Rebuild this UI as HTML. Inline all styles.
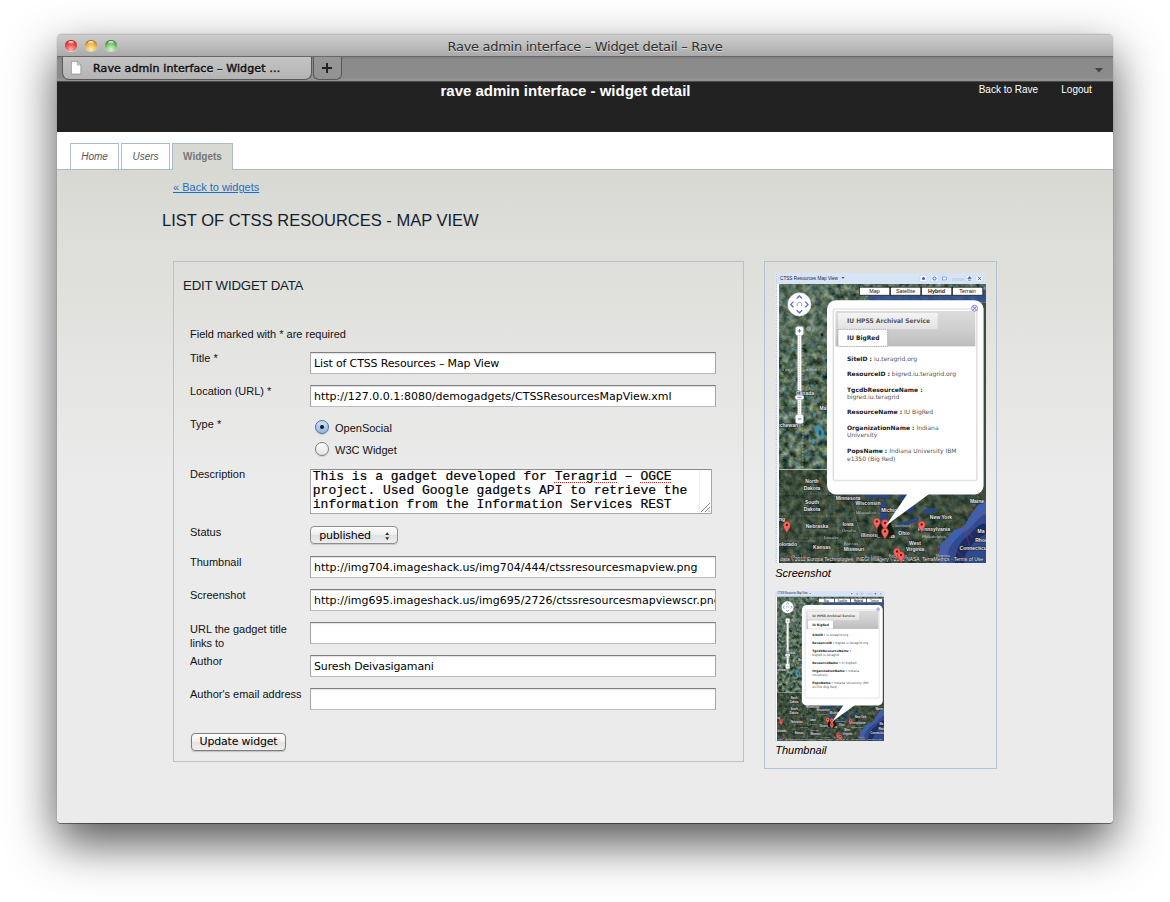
<!DOCTYPE html>
<html lang="en">
<head>
<meta charset="utf-8">
<title>Rave admin interface - Widget detail - Rave</title>
<style>
*{box-sizing:border-box}
html,body{margin:0;padding:0}
body{width:1170px;height:902px;background:#fff;position:relative;overflow:hidden;font-family:"Liberation Sans",Arial,sans-serif;color:#000}
.abs{position:absolute}
.win{position:absolute;left:57px;top:34px;width:1056px;height:789px;border-radius:5px 5px 4px 4px;background:#ebebeb;box-shadow:0 0 1px rgba(0,0,0,.5),0 1px 0 rgba(0,0,0,.4),0 20px 48px rgba(0,0,0,.68)}
.clip{position:absolute;left:0;top:0;width:1056px;height:789px;border-radius:5px 5px 4px 4px;overflow:hidden}
.titlebar{position:absolute;left:0;top:0;width:1056px;height:23px;background:linear-gradient(#cccccc,#bdbdbd 50%,#a9a9a9);border-bottom:1px solid #686868;border-top:1px solid #bcbcbc}
.title{position:absolute;left:0;width:1056px;top:4px;text-align:center;font:13px/16px "DejaVu Sans","Liberation Sans",sans-serif;color:#2f2f2f;letter-spacing:-.3px;text-shadow:0 1px 0 rgba(255,255,255,.5)}
.tl{position:absolute;top:4.9px;width:11.6px;height:11.6px;border-radius:50%;box-shadow:0 1px 0 rgba(255,255,255,.45)}
.tl.r{left:8px;background:radial-gradient(circle at 50% 86%,#ffb9b2 0,#f4645e 36%,#e23e3c 60%,#9a2222 88%,#7e1a1a 100%)}
.tl.y{left:28px;background:radial-gradient(circle at 50% 86%,#fff2ac 0,#f9c762 36%,#eb9f3e 60%,#96601a 88%,#7c4e12 100%)}
.tl.g{left:48px;background:radial-gradient(circle at 50% 86%,#dcf6c4 0,#9bd689 36%,#62b055 60%,#337330 88%,#285c26 100%)}
.tl:after{content:"";position:absolute;left:3px;top:1.2px;width:6px;height:3.4px;border-radius:50%;background:linear-gradient(rgba(255,255,255,.9),rgba(255,255,255,.15))}
.tabbar{position:absolute;left:0;top:23px;width:1056px;height:25px;background:linear-gradient(#7e7e7e,#8b8b8b 3px,#8b8b8b 21px,#9a9a9a 23px,#8a8a8a);border-bottom:1px solid #4a4a4a}
.btab{position:absolute;left:5px;top:0;width:250px;height:23px;background:linear-gradient(#c4c4c4,#b4b4b4);border:1px solid #585858;border-top:0;border-radius:0 0 7px 7px}
.btab span{position:absolute;left:30px;top:3.8px;font:11px/16px "DejaVu Sans","Liberation Sans",sans-serif;color:#111;letter-spacing:.12px;-webkit-text-stroke:.45px #111;white-space:nowrap;text-shadow:0 1px 0 rgba(255,255,255,.4)}
.plus{position:absolute;left:255.5px;top:0;width:29.5px;height:23px;background:linear-gradient(#969696,#929292);border:1px solid #585858;border-top:0;border-radius:0 0 6px 6px}
.hdr{position:absolute;left:0;top:48px;width:1056px;height:50px;background:#222}
.hdr h1{position:absolute;left:0;top:0;margin:0;width:1017px;text-align:center;font:bold 15px/18px "Liberation Sans",sans-serif;color:#fff;padding-top:.2px}
.hdr a{position:absolute;top:0;font:10px/14px "Liberation Sans",sans-serif;color:#fff;text-decoration:none;white-space:nowrap}
.nav{position:absolute;left:0;top:98px;width:1056px;height:38px;background:#fff;border-bottom:1px solid #a9bccb}
.nav a{position:absolute;top:11px;height:26px;border:1px solid #a9bccb;border-bottom:0;background:#fff;font:italic 10px/25px "Liberation Sans",sans-serif;color:#555;text-align:center;text-decoration:none}
.nav a.on{background:#d9d9d4;font:bold 10px/25px "Liberation Sans",sans-serif;color:#777;height:27px}
.content{position:absolute;left:0;top:136px;width:1056px;height:653px;background:linear-gradient(#d9d9d4 0,#ebebeb 310px,#ebebeb 100%)}

.content .back{position:absolute;left:116px;top:10px;font:11px/14px "Liberation Sans",sans-serif;color:#1a6fc4;text-decoration:underline;white-space:nowrap}
.content h2{position:absolute;left:105px;top:40px;margin:0;font:normal 16.5px/20px "Liberation Sans",sans-serif;color:#13202c;white-space:nowrap;letter-spacing:0}
.panel{position:absolute;border:1px solid #b3c3d1}
.panel h3{position:absolute;left:9px;top:15.7px;margin:0;font:normal 13.25px/16px "Liberation Sans",sans-serif;color:#13202c;white-space:nowrap;letter-spacing:-.2px}
.lbl{position:absolute;left:16px;font:11px/13px "Liberation Sans",sans-serif;color:#111;white-space:nowrap}
.inp{position:absolute;left:136px;width:406px;height:22px;background:#fff;border:1px solid #a6a6a6;border-top-color:#7f7f7f;border-bottom-color:#bcbcbc;box-shadow:inset 0 1px 1px rgba(0,0,0,.12);font:11px/20px "DejaVu Sans","Liberation Sans",sans-serif;color:#000;padding:1px 0 0 3px;white-space:nowrap;overflow:hidden;letter-spacing:0}
.radio{position:absolute;left:140.5px;width:14px;height:14px;margin-top:-.5px;border-radius:50%;border:1px solid #7d7d7d;background:linear-gradient(#fdfdfd,#e3e3e3);box-shadow:0 1px 1px rgba(0,0,0,.12)}
.radio.on{border-color:#4f6f9f;background:linear-gradient(#cfe0f6,#8fb3e6)}
.radio.on:after{content:"";position:absolute;left:4px;top:4px;width:4px;height:4px;border-radius:50%;background:#1a1a1a}
.rl{position:absolute;left:161px;font:11px/13px "Liberation Sans",sans-serif;color:#111;white-space:nowrap}
.ta{position:absolute;left:136px;top:207px;width:402px;height:45px;background:#fff;border:1px solid #a8a8a8;border-top-color:#8a8a8a;font:13px/14px "Liberation Mono",monospace;color:#000;padding:0 0 0 1.8px;white-space:pre;overflow:hidden;-webkit-text-stroke:.2px #000}
.ta u{text-decoration:underline dotted #e0201a;text-decoration-thickness:1.4px;text-underline-offset:1.5px}
.ta i{position:absolute;right:0;top:0;width:12px;height:43px;background:#fff;border-left:1px solid #eee}
.sel svg{position:absolute;right:7.5px;top:4.5px}
.sel{position:absolute;left:136px;top:264px;width:88px;height:17.7px;padding-top:.6px;border:1px solid #8e8e8e;border-radius:4px;background:linear-gradient(#fefefe,#ececec 50%,#e0e0e0 51%,#ededed);box-shadow:0 1px 1px rgba(0,0,0,.15);font:11px/15px "DejaVu Sans","Liberation Sans",sans-serif;color:#000;padding-left:8.2px;letter-spacing:-.2px}
.btn{position:absolute;left:17px;top:471px;width:95px;height:18px;border:1px solid #7e7e7e;border-radius:4px;background:linear-gradient(#fefefe,#efefef 50%,#e3e3e3 51%,#efefef);box-shadow:0 1px 1px rgba(0,0,0,.18);font:11px/16.5px "DejaVu Sans","Liberation Sans",sans-serif;color:#000;text-align:center;letter-spacing:-.2px}
.cap{position:absolute;left:10.2px;font:italic 11px/14px "Liberation Sans",sans-serif;color:#000}
</style>
</head>
<body>
<div class="win"><div class="clip">
  <div class="titlebar">
    <div class="tl r"></div><div class="tl y"></div><div class="tl g"></div>
    <div class="title">Rave admin interface – Widget detail – Rave</div>
  </div>
  <div class="tabbar">
    <div class="btab">
      <svg class="abs" style="left:6.500px;top:3px" width="12.700" height="15.400" viewBox="0 0 14 17"><path d="M1.5 1.5h6.500l4 4v10h-10.500z" fill="#fff" stroke="#8a8a8a" stroke-width=".8"/><path d="M8 1.500v4h4z" fill="#e4e4e4" stroke="#8a8a8a" stroke-width=".7"/></svg>
      <span>Rave admin interface – Widget …</span>
    </div>
    <div class="plus"><svg class="abs" style="left:7.3px;top:4.8px" width="12" height="12" viewBox="0 0 12 12"><path d="M6 1v10M1 6h10" stroke="#222" stroke-width="2" fill="none"/></svg></div>
    <svg class="abs" style="left:1037.5px;top:11px" width="8" height="5" viewBox="0 0 8 5"><path d="M0 0h8l-4 4.600z" fill="#444"/></svg>
  </div>
  <div class="hdr">
    <h1>rave admin interface - widget detail</h1>
    <a style="left:921.7px;top:.5px">Back to Rave</a>
    <a style="left:1004.3px;top:.5px">Logout</a>
  </div>
  <div class="nav">
    <a style="left:13px;width:49px">Home</a>
    <a style="left:64px;width:49px">Users</a>
    <a class="on" style="left:115px;width:61px">Widgets</a>
  </div>
  <div class="content">
    <a class="back">« Back to widgets</a>
    <h2>LIST OF CTSS RESOURCES - MAP VIEW</h2>
    <div class="panel" style="left:116px;top:91px;width:571px;height:501px">
      <h3>EDIT WIDGET DATA</h3>
      <div class="lbl" style="top:66px">Field marked with * are required</div>
      <div class="lbl" style="top:90px">Title *</div>
      <div class="inp" style="top:90px;letter-spacing:-.15px">List of CTSS Resources – Map View</div>
      <div class="lbl" style="top:123px">Location (URL) *</div>
      <div class="inp" style="top:123px">http://127.0.0.1:8080/demogadgets/CTSSResourcesMapView.xml</div>
      <div class="lbl" style="top:156px">Type *</div>
      <div class="radio on" style="top:158px"></div><div class="rl" style="top:160px">OpenSocial</div>
      <div class="radio" style="top:180.5px"></div><div class="rl" style="top:182px">W3C Widget</div>
      <div class="lbl" style="top:206px">Description</div>
      <div class="ta">This is a gadget developed for <u>Teragrid</u> – <u>OGCE</u>
project. Used Google gadgets API to retrieve the
information from the Information Services REST<i><svg class="abs" style="right:0;bottom:0" width="11" height="11" viewBox="0 0 11 11"><path d="M10 1L1 10M10 5L5 10M10 8.500L8.500 10" stroke="#8a8a8a" stroke-width="1" fill="none"/></svg></i></div>
      <div class="lbl" style="top:264px">Status</div>
      <div class="sel">published<svg width="4.400" height="8.400" viewBox="0 0 5 9"><path d="M2.500 0L4.800 3.200H.2zM2.500 9L4.800 5.800H.2z" fill="#333"/></svg></div>
      <div class="lbl" style="top:294px">Thumbnail</div>
      <div class="inp" style="top:294px">http://img704.imageshack.us/img704/444/ctssresourcesmapview.png</div>
      <div class="lbl" style="top:327px">Screenshot</div>
      <div class="inp" style="top:327px">http://img695.imageshack.us/img695/2726/ctssresourcesmapviewscr.png</div>
      <div class="lbl" style="top:359.5px;white-space:normal;width:110px;line-height:14px">URL the gadget title links to</div>
      <div class="inp" style="top:360px"></div>
      <div class="lbl" style="top:393px">Author</div>
      <div class="inp" style="top:393px;letter-spacing:-.15px">Suresh Deivasigamani</div>
      <div class="lbl" style="top:426px">Author's email address</div>
      <div class="inp" style="top:426px"></div>
      <div class="btn">Update widget</div>
    </div>
    <div class="panel" style="left:707px;top:91px;width:233px;height:508px">
      <div class="abs" id="shot" style="left:10px;top:11px;width:211px;height:290px;background:#566"><svg width="211" height="290" viewBox="-1 0 211 290" preserveAspectRatio="none" style="position:absolute;left:0;top:0;display:block"><defs>
<filter id="sata" x="0" y="0" width="100%" height="100%" color-interpolation-filters="sRGB">
<feTurbulence type="fractalNoise" baseFrequency="0.15" numOctaves="3" seed="7" result="n"/>
<feColorMatrix in="n" type="matrix" values="0.8 0.3 0 0 -0.23  0.8 0.1 0 0 -0.04  0.7 0 0.25 0 -0.135  0 0 0 0 1"/>
</filter>
<linearGradient id="tga" x1="0" y1="0" x2="0" y2="1"><stop offset="0" stop-color="#dcdcdc"/><stop offset=".5" stop-color="#cfcfcf"/><stop offset="1" stop-color="#bdbdbd"/></linearGradient>
<linearGradient id="t1a" x1="0" y1="0" x2="0" y2="1"><stop offset="0" stop-color="#f4f4f4"/><stop offset="1" stop-color="#e2e2e2"/></linearGradient>
<radialGradient id="oca" cx="1" cy="1" r="1"><stop offset="0" stop-color="#3a62a8"/><stop offset=".6" stop-color="#2c4c8c"/><stop offset="1" stop-color="#1d2f5c"/></radialGradient>
<clipPath id="mca"><rect x="3" y="11" width="207" height="279"/></clipPath>
<style>.ml{font-family:'Liberation Sans',sans-serif;font-weight:bold;fill:#e9e9e9;stroke:#1c1c1c;stroke-opacity:.8;stroke-width:1.2px;paint-order:stroke;stroke-linejoin:round}</style>
</defs><rect x="-1" y="0" width="211" height="290" fill="#eef3fb"/><rect x="1" y="0" width="209" height="11" fill="#d6e4f6"/><text x="4" y="6.8" font-size="5.6" font-family="'Liberation Sans',sans-serif" fill="#1b1b3a" textLength="58" lengthAdjust="spacingAndGlyphs">CTSS Resources Map View</text><path d="M65.500 3.900h3l-1.500 2z" fill="#3355aa"/><rect x="144" y="2.2" width="7" height="6.6" rx="1" fill="#f4f7fd" stroke="#b9c8e6" stroke-width=".5"/><rect x="155" y="2.2" width="7" height="6.6" rx="1" fill="#f4f7fd" stroke="#b9c8e6" stroke-width=".5"/><rect x="165" y="2.2" width="7" height="6.6" rx="1" fill="#f4f7fd" stroke="#b9c8e6" stroke-width=".5"/><rect x="190" y="2.2" width="7" height="6.6" rx="1" fill="#f4f7fd" stroke="#b9c8e6" stroke-width=".5"/><rect x="200" y="2.2" width="7" height="6.6" rx="1" fill="#f4f7fd" stroke="#b9c8e6" stroke-width=".5"/><circle cx="147.5" cy="5.5" r="1.5" fill="#3a5fc4"/><circle cx="158.5" cy="5.5" r="1.6" fill="none" stroke="#3a5fc4" stroke-width=".9"/><rect x="166.6" y="4" width="3.8" height="3" fill="none" stroke="#5a7ad0" stroke-width=".7"/><path d="M193.5 3.6l1.8 2h-3.6zM191.8 7.2h3.4" stroke="#3a5fc4" stroke-width=".7" fill="#3a5fc4"/><path d="M202 3.8l3 3.4M205 3.8l-3 3.4" stroke="#3a5fc4" stroke-width=".9"/><text x="176" y="7.6" font-size="5" font-family="'Liberation Sans',sans-serif" fill="#b4bfd6">move</text><path d="M0.200 1V290" stroke="#a9c0e8" stroke-width="1.600" stroke-dasharray="1 1.200"/><rect x="1.500" y="11" width="1.500" height="279" fill="#fff"/><g clip-path="url(#mca)"><rect x="3" y="11" width="207" height="279" fill="#56665a"/><rect x="3" y="11" width="207" height="279" filter="url(#sata)"/><rect x="3" y="197" width="207" height="93" fill="#262e1f" opacity=".48"/><rect x="3" y="11" width="50" height="60" fill="#6f7f74" opacity=".25"/><path d="M95 19c10-3 30-5 50-4s40-2 65 2v12H95c-4-3-4-8 0-10z" fill="#34528f" opacity=".9"/><rect x="206.500" y="30" width="4" height="200" fill="#3d4b40"/><path d="M210 227L200.800 233L192.900 244.900L187.900 253.900L177.900 256.900L170.900 265.900L163.900 271.900L163.900 290H210z" fill="#3f60ad"/><path d="M210 241c-5 2-9 6-13 11s-9 6-13 10-9 9-11 14-2 9-2 14h39z" fill="#2d4a92"/><path d="M210 250c-6 1-10 4-14 9s-9 7-12 12-5 12-5 19h9c0-7 3-12 7-17s8-9 15-12z" fill="#1b2d62"/><path d="M182.900 233L210 242M187.900 241L210 251M192.900 251L202.800 259M187.900 254L193.900 274M188.900 254L196.900 265M169.900 268L187.900 285M167.900 273L183.900 290M161.900 272L175.900 290M159.900 273L162.900 290" stroke="#a8384a" stroke-width=".55" fill="none" opacity=".9"/><path d="M103.500 229c2.500-1.500 6-.5 7 3s.5 9 0 14-5 6-6 2 .5-8 0-11-3-6.500-1-8z" fill="#2b4684"/><path d="M92 221c5-2 14-2 20 1s2 4-4 3-11 1-16 0-3-3 0-4z" fill="#2b4684"/><path d="M125 222c4-1 9 2 11 6s3 10 0 12-5-3-7-7-7-9-4-11z" fill="#263f7c"/><path d="M124 250c5-1 11-3 15-5s5 0 3 2-10 5-16 6-5-2-2-3z" fill="#2b4684"/><path d="M148 237c4-2 10-2 13-1s0 3-4 4-8 1-10 0 0-2 1-3z" fill="#2b4684"/><path d="M40 153c3-2 7 1 8 6s0 8-3 7-3-4-5-6-2-5 0-7zM37 140c2-1 4 1 3 3s-4 1-3-3zM36 166c2 0 4 2 3 4s-4 0-3-4z" fill="#3f93b4" opacity=".85"/><path d="M43 157c2 0 3 3 2 5s-3-1-2-5z" fill="#1d4f6c"/><path d="M31 54c2-1 4 0 4 2s-2 3-4 2-1-3 0-4z" fill="#c9d0d0" opacity=".55"/><path d="M45 60c2 0 3 2 2 3s-3 0-2-3z" fill="#1a1f1c"/><path d="M3 97H51" stroke="#d8d8c8" stroke-width=".6" stroke-dasharray="2 1" opacity=".8"/><path d="M26.8 70V196" stroke="#d8d8c8" stroke-width=".6" stroke-dasharray="2 1" opacity=".7"/><path d="M3 196.5H60" stroke="#cfcfc4" stroke-width=".9" opacity=".9"/><path d="M3 221H58M3 243H62M20 265H75M58 197V243M62 243V290M75 221l4 22 6 20 8 14M3 268H40" stroke="#c9c9b8" stroke-width=".5" stroke-dasharray="1.6 1" opacity=".6" fill="none"/><text x="36" y="209.5" font-size="5.0" text-anchor="middle" class="ml">North</text><text x="36" y="216.5" font-size="5.0" text-anchor="middle" class="ml">Dakota</text><text x="36" y="231" font-size="5.0" text-anchor="middle" class="ml">South</text><text x="36" y="238" font-size="5.0" text-anchor="middle" class="ml">Dakota</text><text x="41" y="255" font-size="5.0" text-anchor="middle" class="ml">Nebraska</text><text x="72" y="252.5" font-size="5.0" text-anchor="middle" class="ml">Iowa</text><text x="46" y="276" font-size="5.0" text-anchor="middle" class="ml">Kansas</text><text x="78" y="278" font-size="5.0" text-anchor="middle" class="ml">Missouri</text><text x="93" y="263.5" font-size="5.0" text-anchor="middle" class="ml">Illinois</text><text x="128" y="262" font-size="5.0" text-anchor="middle" class="ml">Ohio</text><text x="92" y="232" font-size="5.0" text-anchor="middle" class="ml">Wisconsin</text><text x="116" y="239" font-size="5.0" text-anchor="middle" class="ml">Michigan</text><text x="165" y="245.5" font-size="5.0" text-anchor="middle" class="ml">New York</text><text x="139" y="271.5" font-size="5.0" text-anchor="middle" class="ml">West</text><text x="139" y="278" font-size="5.0" text-anchor="middle" class="ml">Virginia</text><text x="198" y="277" font-size="5.0" text-anchor="middle" class="ml">Connecticut</text><text x="207" y="269" font-size="5.0" text-anchor="middle" class="ml">Rhode</text><text x="201" y="230" font-size="5.0" text-anchor="middle" class="ml">Maine</text><text x="158" y="258" font-size="5.0" text-anchor="middle" class="ml">Pennsylvania</text><text x="10" y="273" font-size="5.0" text-anchor="middle" class="ml">Colorado</text><text x="72" y="226.5" font-size="5.0" text-anchor="middle" class="ml">Minnesota</text><text x="110" y="264.5" font-size="5.0" text-anchor="middle" class="ml">Indiana</text><text x="12" y="154" font-size="5.0" text-anchor="middle" class="ml">tchewan</text><text x="47" y="136.5" font-size="5.0" text-anchor="middle" class="ml">Ma</text><text x="6" y="247.5" font-size="5.0" text-anchor="middle" class="ml">ng</text><text x="205" y="260" font-size="5.0" text-anchor="middle" class="ml">Ma</text><text x="90" y="241" font-size="4.4" text-anchor="middle" font-family="'Liberation Sans',sans-serif" fill="#d9d9d9" opacity=".75">Milwaukee</text><text x="55" y="266" font-size="4.4" text-anchor="middle" font-family="'Liberation Sans',sans-serif" fill="#d9d9d9" opacity=".75">Lincoln</text><text x="73" y="259" font-size="4.4" text-anchor="middle" font-family="'Liberation Sans',sans-serif" fill="#d9d9d9" opacity=".75">Omaha</text><text x="125" y="254" font-size="4.4" text-anchor="middle" font-family="'Liberation Sans',sans-serif" fill="#d9d9d9" opacity=".75">Cleveland</text><text x="158" y="265" font-size="4.4" text-anchor="middle" font-family="'Liberation Sans',sans-serif" fill="#d9d9d9" opacity=".75">Philadelphia</text><text x="75" y="272" font-size="4.4" text-anchor="middle" font-family="'Liberation Sans',sans-serif" fill="#d9d9d9" opacity=".75">Kansas</text><text x="78" y="277" font-size="4.4" text-anchor="middle" font-family="'Liberation Sans',sans-serif" fill="#d9d9d9" opacity=".75">City</text><text x="97" y="285" font-size="4.4" text-anchor="middle" font-family="'Liberation Sans',sans-serif" fill="#d9d9d9" opacity=".75">St. Louis</text><text x="122" y="284" font-size="4.4" text-anchor="middle" font-family="'Liberation Sans',sans-serif" fill="#d9d9d9" opacity=".75">Kentucky</text><text x="167" y="284" font-size="4.4" text-anchor="middle" font-family="'Liberation Sans',sans-serif" fill="#d9d9d9" opacity=".75">Virginia</text><path d="M101 251l14-1 3 10-6 6-10-2z" fill="#0c0f0c" opacity=".85"/><text x="4" y="286" font-size="9" font-family="'Liberation Serif',serif" opacity=".95"><tspan fill="#3a66d8">G</tspan><tspan fill="#d8413a">o</tspan><tspan fill="#e6b422">o</tspan><tspan fill="#3a66d8">g</tspan><tspan fill="#3aa856">l</tspan><tspan fill="#d8413a">e</tspan></text><text x="4" y="288" font-size="4.9" font-family="'Liberation Sans',sans-serif" fill="#f1f1f1" stroke="#222" stroke-width=".5" paint-order="stroke" textLength="203" lengthAdjust="spacingAndGlyphs">data ©2012 Europa Technologies, INEGI Imagery ©2012 NASA, TerraMetrics - Terms of Use</text><g transform="translate(10.8,252.5) scale(1.0)"><path d="M0 8.2C-0.6 4.6-3.6 3-3.6-0.4a3.6 3.6 0 0 1 7.2 0C3.6 3 0.6 4.6 0 8.2z" fill="#f2665e" stroke="#8c2a25" stroke-width=".5"/><circle cx="0" cy="-0.5" r="1.15" fill="#5a1512"/></g><g transform="translate(100.8,249) scale(1.0)"><path d="M0 8.2C-0.6 4.6-3.6 3-3.6-0.4a3.6 3.6 0 0 1 7.2 0C3.6 3 0.6 4.6 0 8.2z" fill="#f2665e" stroke="#8c2a25" stroke-width=".5"/><circle cx="0" cy="-0.5" r="1.15" fill="#5a1512"/></g><g transform="translate(109,250.5) scale(1.0)"><path d="M0 8.2C-0.6 4.6-3.6 3-3.6-0.4a3.6 3.6 0 0 1 7.2 0C3.6 3 0.6 4.6 0 8.2z" fill="#f2665e" stroke="#8c2a25" stroke-width=".5"/><circle cx="0" cy="-0.5" r="1.15" fill="#5a1512"/></g><g transform="translate(145.7,252) scale(1.0)"><path d="M0 8.2C-0.6 4.6-3.6 3-3.6-0.4a3.6 3.6 0 0 1 7.2 0C3.6 3 0.6 4.6 0 8.2z" fill="#f2665e" stroke="#8c2a25" stroke-width=".5"/><circle cx="0" cy="-0.5" r="1.15" fill="#5a1512"/></g><g transform="translate(109,259) scale(1.0)"><path d="M0 8.2C-0.6 4.6-3.6 3-3.6-0.4a3.6 3.6 0 0 1 7.2 0C3.6 3 0.6 4.6 0 8.2z" fill="#f2665e" stroke="#8c2a25" stroke-width=".5"/><circle cx="0" cy="-0.5" r="1.15" fill="#5a1512"/></g><g transform="translate(121,279) scale(1.0)"><path d="M0 8.2C-0.6 4.6-3.6 3-3.6-0.4a3.6 3.6 0 0 1 7.2 0C3.6 3 0.6 4.6 0 8.2z" fill="#f2665e" stroke="#8c2a25" stroke-width=".5"/><circle cx="0" cy="-0.5" r="1.15" fill="#5a1512"/></g><g transform="translate(125,282.5) scale(1.0)"><path d="M0 8.2C-0.6 4.6-3.6 3-3.6-0.4a3.6 3.6 0 0 1 7.2 0C3.6 3 0.6 4.6 0 8.2z" fill="#f2665e" stroke="#8c2a25" stroke-width=".5"/><circle cx="0" cy="-0.5" r="1.15" fill="#5a1512"/></g><circle cx="23.4" cy="31.4" r="11.6" fill="#fff" stroke="#cfd6df" stroke-width=".6"/><path d="M20.6 25.6l2.8-2.6 2.8 2.6M20.6 37.2l2.8 2.6 2.8-2.6M17.4 28.6l-2.6 2.8 2.6 2.8M29.4 28.6l2.6 2.8-2.6 2.8" fill="none" stroke="#4a72d4" stroke-width="1.3"/><path d="M21.3 33.2c-.6-2 0-3.8 2.1-3.8s2.8 1.8 2.2 3.8" fill="none" stroke="#7f9be0" stroke-width="1"/><rect x="21.6" y="58" width="3.8" height="86" fill="#fff" stroke="#bbb" stroke-width=".4"/><path d="M23.5 62V146" stroke="#c4c4c4" stroke-width="1" stroke-dasharray=".8 1.4"/><rect x="19.6" y="53.4" width="7.8" height="9" rx="2" fill="#fff" stroke="#bbb" stroke-width=".4"/><path d="M21.8 57.9h3.4M23.5 56.2v3.4" stroke="#4a72d4" stroke-width="1"/><rect x="19.6" y="141.500" width="7.8" height="9" rx="2" fill="#fff" stroke="#bbb" stroke-width=".4"/><path d="M21.8 146h3.4" stroke="#4a72d4" stroke-width="1"/><rect x="19.2" y="122.2" width="8.6" height="4.2" rx="1.6" fill="#fff" stroke="#999" stroke-width=".4"/><path d="M21.6 124.3h3.8" stroke="#4a72d4" stroke-width=".9"/><text x="29" y="122" font-size="5.0" text-anchor="middle" class="ml">Canada</text><rect x="19.2" y="122.2" width="8.6" height="4.2" rx="1.6" fill="#fff" stroke="#999" stroke-width=".4"/><path d="M21.6 124.3h3.8" stroke="#4a72d4" stroke-width=".9"/><rect x="83.4" y="14.2" width="30.4" height="8" fill="#fff" stroke="#111" stroke-width=".7"/><text x="98.60000000000001" y="20.4" font-size="5.4" text-anchor="middle" font-family="'Liberation Sans',sans-serif" fill="#111">Map</text><rect x="114.4" y="14.2" width="30.4" height="8" fill="#fff" stroke="#111" stroke-width=".7"/><text x="129.6" y="20.4" font-size="5.4" text-anchor="middle" font-family="'Liberation Sans',sans-serif" fill="#111">Satellite</text><rect x="145.4" y="14.2" width="30.4" height="8" fill="#fff" stroke="#111" stroke-width=".7"/><text x="160.6" y="20.4" font-size="5.4" text-anchor="middle" font-family="'Liberation Sans',sans-serif" fill="#111" font-weight="bold">Hybrid</text><rect x="176.4" y="14.2" width="30.4" height="8" fill="#fff" stroke="#111" stroke-width=".7"/><text x="191.6" y="20.4" font-size="5.4" text-anchor="middle" font-family="'Liberation Sans',sans-serif" fill="#111">Terrain</text><path d="M132 220L110 252.5L154.5 220z" fill="#fff"/><rect x="51" y="27.3" width="156.600" height="194.200" rx="9" fill="#fff"/><rect x="57.600" y="36" width="143.200" height="171.400" rx="1.500" fill="#fff" stroke="#cfcfcf" stroke-width=".9"/><rect x="56.800" y="35.400" width="144.800" height="172.600" rx="2" fill="none" stroke="#ececec" stroke-width="1"/><rect x="59.500" y="38" width="139.800" height="35.400" fill="url(#tga)"/><rect x="62" y="40" width="99.7" height="16.2" fill="url(#t1a)"/><rect x="62" y="56.4" width="49.6" height="17" fill="#fff" stroke="#777" stroke-width=".6" stroke-dasharray="1 .8"/><text x="71" y="49.5" font-size="6.3" font-weight="bold" font-family="'DejaVu Sans','Liberation Sans',sans-serif" fill="#555" textLength="83" lengthAdjust="spacingAndGlyphs">IU HPSS Archival Service</text><text x="71" y="67" font-size="6.3" font-weight="bold" font-family="'DejaVu Sans','Liberation Sans',sans-serif" fill="#222" textLength="32.5" lengthAdjust="spacingAndGlyphs">IU BigRed</text><circle cx="198.6" cy="35.2" r="3" fill="#eef" stroke="#6a5fd0" stroke-width=".7"/><path d="M196.9 33.5l3.4 3.4M200.3 33.5l-3.4 3.4" stroke="#5a4fc8" stroke-width=".8"/><text x="71" y="87.6" font-size="6" font-family="'DejaVu Sans','Liberation Sans',sans-serif" fill="#555" xml:space="preserve"><tspan font-weight="bold" fill="#1a1a1a">SiteID :</tspan> iu.teragrid.org</text><text x="71" y="102.7" font-size="6" font-family="'DejaVu Sans','Liberation Sans',sans-serif" fill="#555" xml:space="preserve"><tspan font-weight="bold" fill="#1a1a1a">ResourceID :</tspan> bigred.iu.teragrid.org</text><text x="71" y="118.6" font-size="6" font-family="'DejaVu Sans','Liberation Sans',sans-serif" fill="#555" xml:space="preserve"><tspan font-weight="bold" fill="#1a1a1a">TgcdbResourceName :</tspan></text><text x="71" y="126.2" font-size="6" font-family="'DejaVu Sans','Liberation Sans',sans-serif" fill="#555" xml:space="preserve"><tspan font-weight="bold" fill="#1a1a1a"></tspan>bigred.iu.teragrid</text><text x="71" y="141.2" font-size="6" font-family="'DejaVu Sans','Liberation Sans',sans-serif" fill="#555" xml:space="preserve"><tspan font-weight="bold" fill="#1a1a1a">ResourceName :</tspan> IU BigRed</text><text x="71" y="157" font-size="6" font-family="'DejaVu Sans','Liberation Sans',sans-serif" fill="#555" xml:space="preserve"><tspan font-weight="bold" fill="#1a1a1a">OrganizationName :</tspan> Indiana</text><text x="71" y="164.4" font-size="6" font-family="'DejaVu Sans','Liberation Sans',sans-serif" fill="#555" xml:space="preserve"><tspan font-weight="bold" fill="#1a1a1a"></tspan>University</text><text x="71" y="180.2" font-size="6" font-family="'DejaVu Sans','Liberation Sans',sans-serif" fill="#555" xml:space="preserve"><tspan font-weight="bold" fill="#1a1a1a">PopsName :</tspan> Indiana University IBM</text><text x="71" y="187.6" font-size="6" font-family="'DejaVu Sans','Liberation Sans',sans-serif" fill="#555" xml:space="preserve"><tspan font-weight="bold" fill="#1a1a1a"></tspan>e1350 (Big Red)</text></g></svg></div>
      <div class="cap" style="top:304px">Screenshot</div>
      <div class="abs" id="thumb" style="left:10px;top:329px;width:109px;height:149.8px;background:#566"><svg width="109" height="149.8" viewBox="-1 0 211 290" preserveAspectRatio="none" style="position:absolute;left:0;top:0;display:block"><defs>
<filter id="satb" x="0" y="0" width="100%" height="100%" color-interpolation-filters="sRGB">
<feTurbulence type="fractalNoise" baseFrequency="0.15" numOctaves="3" seed="7" result="n"/>
<feColorMatrix in="n" type="matrix" values="0.8 0.3 0 0 -0.23  0.8 0.1 0 0 -0.04  0.7 0 0.25 0 -0.135  0 0 0 0 1"/>
</filter>
<linearGradient id="tgb" x1="0" y1="0" x2="0" y2="1"><stop offset="0" stop-color="#dcdcdc"/><stop offset=".5" stop-color="#cfcfcf"/><stop offset="1" stop-color="#bdbdbd"/></linearGradient>
<linearGradient id="t1b" x1="0" y1="0" x2="0" y2="1"><stop offset="0" stop-color="#f4f4f4"/><stop offset="1" stop-color="#e2e2e2"/></linearGradient>
<radialGradient id="ocb" cx="1" cy="1" r="1"><stop offset="0" stop-color="#3a62a8"/><stop offset=".6" stop-color="#2c4c8c"/><stop offset="1" stop-color="#1d2f5c"/></radialGradient>
<clipPath id="mcb"><rect x="3" y="11" width="207" height="279"/></clipPath>
<style>.ml{font-family:'Liberation Sans',sans-serif;font-weight:bold;fill:#e9e9e9;stroke:#1c1c1c;stroke-opacity:.8;stroke-width:1.2px;paint-order:stroke;stroke-linejoin:round}</style>
</defs><rect x="-1" y="0" width="211" height="290" fill="#eef3fb"/><rect x="1" y="0" width="209" height="11" fill="#d6e4f6"/><text x="4" y="6.8" font-size="5.6" font-family="'Liberation Sans',sans-serif" fill="#1b1b3a" textLength="58" lengthAdjust="spacingAndGlyphs">CTSS Resources Map View</text><path d="M65.500 3.900h3l-1.500 2z" fill="#3355aa"/><rect x="144" y="2.2" width="7" height="6.6" rx="1" fill="#f4f7fd" stroke="#b9c8e6" stroke-width=".5"/><rect x="155" y="2.2" width="7" height="6.6" rx="1" fill="#f4f7fd" stroke="#b9c8e6" stroke-width=".5"/><rect x="165" y="2.2" width="7" height="6.6" rx="1" fill="#f4f7fd" stroke="#b9c8e6" stroke-width=".5"/><rect x="190" y="2.2" width="7" height="6.6" rx="1" fill="#f4f7fd" stroke="#b9c8e6" stroke-width=".5"/><rect x="200" y="2.2" width="7" height="6.6" rx="1" fill="#f4f7fd" stroke="#b9c8e6" stroke-width=".5"/><circle cx="147.5" cy="5.5" r="1.5" fill="#3a5fc4"/><circle cx="158.5" cy="5.5" r="1.6" fill="none" stroke="#3a5fc4" stroke-width=".9"/><rect x="166.6" y="4" width="3.8" height="3" fill="none" stroke="#5a7ad0" stroke-width=".7"/><path d="M193.5 3.6l1.8 2h-3.6zM191.8 7.2h3.4" stroke="#3a5fc4" stroke-width=".7" fill="#3a5fc4"/><path d="M202 3.8l3 3.4M205 3.8l-3 3.4" stroke="#3a5fc4" stroke-width=".9"/><text x="176" y="7.6" font-size="5" font-family="'Liberation Sans',sans-serif" fill="#b4bfd6">move</text><path d="M0.200 1V290" stroke="#a9c0e8" stroke-width="1.600" stroke-dasharray="1 1.200"/><rect x="1.500" y="11" width="1.500" height="279" fill="#fff"/><g clip-path="url(#mcb)"><rect x="3" y="11" width="207" height="279" fill="#56665a"/><rect x="3" y="11" width="207" height="279" filter="url(#satb)"/><rect x="3" y="197" width="207" height="93" fill="#262e1f" opacity=".48"/><rect x="3" y="11" width="50" height="60" fill="#6f7f74" opacity=".25"/><path d="M95 19c10-3 30-5 50-4s40-2 65 2v12H95c-4-3-4-8 0-10z" fill="#34528f" opacity=".9"/><rect x="206.500" y="30" width="4" height="200" fill="#3d4b40"/><path d="M210 227L200.800 233L192.900 244.900L187.900 253.900L177.900 256.900L170.900 265.900L163.900 271.900L163.900 290H210z" fill="#3f60ad"/><path d="M210 241c-5 2-9 6-13 11s-9 6-13 10-9 9-11 14-2 9-2 14h39z" fill="#2d4a92"/><path d="M210 250c-6 1-10 4-14 9s-9 7-12 12-5 12-5 19h9c0-7 3-12 7-17s8-9 15-12z" fill="#1b2d62"/><path d="M182.900 233L210 242M187.900 241L210 251M192.900 251L202.800 259M187.900 254L193.900 274M188.900 254L196.900 265M169.900 268L187.900 285M167.900 273L183.900 290M161.900 272L175.900 290M159.900 273L162.900 290" stroke="#a8384a" stroke-width=".55" fill="none" opacity=".9"/><path d="M103.500 229c2.500-1.500 6-.5 7 3s.5 9 0 14-5 6-6 2 .5-8 0-11-3-6.500-1-8z" fill="#2b4684"/><path d="M92 221c5-2 14-2 20 1s2 4-4 3-11 1-16 0-3-3 0-4z" fill="#2b4684"/><path d="M125 222c4-1 9 2 11 6s3 10 0 12-5-3-7-7-7-9-4-11z" fill="#263f7c"/><path d="M124 250c5-1 11-3 15-5s5 0 3 2-10 5-16 6-5-2-2-3z" fill="#2b4684"/><path d="M148 237c4-2 10-2 13-1s0 3-4 4-8 1-10 0 0-2 1-3z" fill="#2b4684"/><path d="M40 153c3-2 7 1 8 6s0 8-3 7-3-4-5-6-2-5 0-7zM37 140c2-1 4 1 3 3s-4 1-3-3zM36 166c2 0 4 2 3 4s-4 0-3-4z" fill="#3f93b4" opacity=".85"/><path d="M43 157c2 0 3 3 2 5s-3-1-2-5z" fill="#1d4f6c"/><path d="M31 54c2-1 4 0 4 2s-2 3-4 2-1-3 0-4z" fill="#c9d0d0" opacity=".55"/><path d="M45 60c2 0 3 2 2 3s-3 0-2-3z" fill="#1a1f1c"/><path d="M3 97H51" stroke="#d8d8c8" stroke-width=".6" stroke-dasharray="2 1" opacity=".8"/><path d="M26.8 70V196" stroke="#d8d8c8" stroke-width=".6" stroke-dasharray="2 1" opacity=".7"/><path d="M3 196.5H60" stroke="#cfcfc4" stroke-width=".9" opacity=".9"/><path d="M3 221H58M3 243H62M20 265H75M58 197V243M62 243V290M75 221l4 22 6 20 8 14M3 268H40" stroke="#c9c9b8" stroke-width=".5" stroke-dasharray="1.6 1" opacity=".6" fill="none"/><text x="36" y="209.5" font-size="5.0" text-anchor="middle" class="ml">North</text><text x="36" y="216.5" font-size="5.0" text-anchor="middle" class="ml">Dakota</text><text x="36" y="231" font-size="5.0" text-anchor="middle" class="ml">South</text><text x="36" y="238" font-size="5.0" text-anchor="middle" class="ml">Dakota</text><text x="41" y="255" font-size="5.0" text-anchor="middle" class="ml">Nebraska</text><text x="72" y="252.5" font-size="5.0" text-anchor="middle" class="ml">Iowa</text><text x="46" y="276" font-size="5.0" text-anchor="middle" class="ml">Kansas</text><text x="78" y="278" font-size="5.0" text-anchor="middle" class="ml">Missouri</text><text x="93" y="263.5" font-size="5.0" text-anchor="middle" class="ml">Illinois</text><text x="128" y="262" font-size="5.0" text-anchor="middle" class="ml">Ohio</text><text x="92" y="232" font-size="5.0" text-anchor="middle" class="ml">Wisconsin</text><text x="116" y="239" font-size="5.0" text-anchor="middle" class="ml">Michigan</text><text x="165" y="245.5" font-size="5.0" text-anchor="middle" class="ml">New York</text><text x="139" y="271.5" font-size="5.0" text-anchor="middle" class="ml">West</text><text x="139" y="278" font-size="5.0" text-anchor="middle" class="ml">Virginia</text><text x="198" y="277" font-size="5.0" text-anchor="middle" class="ml">Connecticut</text><text x="207" y="269" font-size="5.0" text-anchor="middle" class="ml">Rhode</text><text x="201" y="230" font-size="5.0" text-anchor="middle" class="ml">Maine</text><text x="158" y="258" font-size="5.0" text-anchor="middle" class="ml">Pennsylvania</text><text x="10" y="273" font-size="5.0" text-anchor="middle" class="ml">Colorado</text><text x="72" y="226.5" font-size="5.0" text-anchor="middle" class="ml">Minnesota</text><text x="110" y="264.5" font-size="5.0" text-anchor="middle" class="ml">Indiana</text><text x="12" y="154" font-size="5.0" text-anchor="middle" class="ml">tchewan</text><text x="47" y="136.5" font-size="5.0" text-anchor="middle" class="ml">Ma</text><text x="6" y="247.5" font-size="5.0" text-anchor="middle" class="ml">ng</text><text x="205" y="260" font-size="5.0" text-anchor="middle" class="ml">Ma</text><text x="90" y="241" font-size="4.4" text-anchor="middle" font-family="'Liberation Sans',sans-serif" fill="#d9d9d9" opacity=".75">Milwaukee</text><text x="55" y="266" font-size="4.4" text-anchor="middle" font-family="'Liberation Sans',sans-serif" fill="#d9d9d9" opacity=".75">Lincoln</text><text x="73" y="259" font-size="4.4" text-anchor="middle" font-family="'Liberation Sans',sans-serif" fill="#d9d9d9" opacity=".75">Omaha</text><text x="125" y="254" font-size="4.4" text-anchor="middle" font-family="'Liberation Sans',sans-serif" fill="#d9d9d9" opacity=".75">Cleveland</text><text x="158" y="265" font-size="4.4" text-anchor="middle" font-family="'Liberation Sans',sans-serif" fill="#d9d9d9" opacity=".75">Philadelphia</text><text x="75" y="272" font-size="4.4" text-anchor="middle" font-family="'Liberation Sans',sans-serif" fill="#d9d9d9" opacity=".75">Kansas</text><text x="78" y="277" font-size="4.4" text-anchor="middle" font-family="'Liberation Sans',sans-serif" fill="#d9d9d9" opacity=".75">City</text><text x="97" y="285" font-size="4.4" text-anchor="middle" font-family="'Liberation Sans',sans-serif" fill="#d9d9d9" opacity=".75">St. Louis</text><text x="122" y="284" font-size="4.4" text-anchor="middle" font-family="'Liberation Sans',sans-serif" fill="#d9d9d9" opacity=".75">Kentucky</text><text x="167" y="284" font-size="4.4" text-anchor="middle" font-family="'Liberation Sans',sans-serif" fill="#d9d9d9" opacity=".75">Virginia</text><path d="M101 251l14-1 3 10-6 6-10-2z" fill="#0c0f0c" opacity=".85"/><text x="4" y="286" font-size="9" font-family="'Liberation Serif',serif" opacity=".95"><tspan fill="#3a66d8">G</tspan><tspan fill="#d8413a">o</tspan><tspan fill="#e6b422">o</tspan><tspan fill="#3a66d8">g</tspan><tspan fill="#3aa856">l</tspan><tspan fill="#d8413a">e</tspan></text><text x="4" y="288" font-size="4.9" font-family="'Liberation Sans',sans-serif" fill="#f1f1f1" stroke="#222" stroke-width=".5" paint-order="stroke" textLength="203" lengthAdjust="spacingAndGlyphs">data ©2012 Europa Technologies, INEGI Imagery ©2012 NASA, TerraMetrics - Terms of Use</text><g transform="translate(10.8,252.5) scale(1.0)"><path d="M0 8.2C-0.6 4.6-3.6 3-3.6-0.4a3.6 3.6 0 0 1 7.2 0C3.6 3 0.6 4.6 0 8.2z" fill="#f2665e" stroke="#8c2a25" stroke-width=".5"/><circle cx="0" cy="-0.5" r="1.15" fill="#5a1512"/></g><g transform="translate(100.8,249) scale(1.0)"><path d="M0 8.2C-0.6 4.6-3.6 3-3.6-0.4a3.6 3.6 0 0 1 7.2 0C3.6 3 0.6 4.6 0 8.2z" fill="#f2665e" stroke="#8c2a25" stroke-width=".5"/><circle cx="0" cy="-0.5" r="1.15" fill="#5a1512"/></g><g transform="translate(109,250.5) scale(1.0)"><path d="M0 8.2C-0.6 4.6-3.6 3-3.6-0.4a3.6 3.6 0 0 1 7.2 0C3.6 3 0.6 4.6 0 8.2z" fill="#f2665e" stroke="#8c2a25" stroke-width=".5"/><circle cx="0" cy="-0.5" r="1.15" fill="#5a1512"/></g><g transform="translate(145.7,252) scale(1.0)"><path d="M0 8.2C-0.6 4.6-3.6 3-3.6-0.4a3.6 3.6 0 0 1 7.2 0C3.6 3 0.6 4.6 0 8.2z" fill="#f2665e" stroke="#8c2a25" stroke-width=".5"/><circle cx="0" cy="-0.5" r="1.15" fill="#5a1512"/></g><g transform="translate(109,259) scale(1.0)"><path d="M0 8.2C-0.6 4.6-3.6 3-3.6-0.4a3.6 3.6 0 0 1 7.2 0C3.6 3 0.6 4.6 0 8.2z" fill="#f2665e" stroke="#8c2a25" stroke-width=".5"/><circle cx="0" cy="-0.5" r="1.15" fill="#5a1512"/></g><g transform="translate(121,279) scale(1.0)"><path d="M0 8.2C-0.6 4.6-3.6 3-3.6-0.4a3.6 3.6 0 0 1 7.2 0C3.6 3 0.6 4.6 0 8.2z" fill="#f2665e" stroke="#8c2a25" stroke-width=".5"/><circle cx="0" cy="-0.5" r="1.15" fill="#5a1512"/></g><g transform="translate(125,282.5) scale(1.0)"><path d="M0 8.2C-0.6 4.6-3.6 3-3.6-0.4a3.6 3.6 0 0 1 7.2 0C3.6 3 0.6 4.6 0 8.2z" fill="#f2665e" stroke="#8c2a25" stroke-width=".5"/><circle cx="0" cy="-0.5" r="1.15" fill="#5a1512"/></g><circle cx="23.4" cy="31.4" r="11.6" fill="#fff" stroke="#cfd6df" stroke-width=".6"/><path d="M20.6 25.6l2.8-2.6 2.8 2.6M20.6 37.2l2.8 2.6 2.8-2.6M17.4 28.6l-2.6 2.8 2.6 2.8M29.4 28.6l2.6 2.8-2.6 2.8" fill="none" stroke="#4a72d4" stroke-width="1.3"/><path d="M21.3 33.2c-.6-2 0-3.8 2.1-3.8s2.8 1.8 2.2 3.8" fill="none" stroke="#7f9be0" stroke-width="1"/><rect x="21.6" y="58" width="3.8" height="86" fill="#fff" stroke="#bbb" stroke-width=".4"/><path d="M23.5 62V146" stroke="#c4c4c4" stroke-width="1" stroke-dasharray=".8 1.4"/><rect x="19.6" y="53.4" width="7.8" height="9" rx="2" fill="#fff" stroke="#bbb" stroke-width=".4"/><path d="M21.8 57.9h3.4M23.5 56.2v3.4" stroke="#4a72d4" stroke-width="1"/><rect x="19.6" y="141.500" width="7.8" height="9" rx="2" fill="#fff" stroke="#bbb" stroke-width=".4"/><path d="M21.8 146h3.4" stroke="#4a72d4" stroke-width="1"/><rect x="19.2" y="122.2" width="8.6" height="4.2" rx="1.6" fill="#fff" stroke="#999" stroke-width=".4"/><path d="M21.6 124.3h3.8" stroke="#4a72d4" stroke-width=".9"/><text x="29" y="122" font-size="5.0" text-anchor="middle" class="ml">Canada</text><rect x="19.2" y="122.2" width="8.6" height="4.2" rx="1.6" fill="#fff" stroke="#999" stroke-width=".4"/><path d="M21.6 124.3h3.8" stroke="#4a72d4" stroke-width=".9"/><rect x="83.4" y="14.2" width="30.4" height="8" fill="#fff" stroke="#111" stroke-width=".7"/><text x="98.60000000000001" y="20.4" font-size="5.4" text-anchor="middle" font-family="'Liberation Sans',sans-serif" fill="#111">Map</text><rect x="114.4" y="14.2" width="30.4" height="8" fill="#fff" stroke="#111" stroke-width=".7"/><text x="129.6" y="20.4" font-size="5.4" text-anchor="middle" font-family="'Liberation Sans',sans-serif" fill="#111">Satellite</text><rect x="145.4" y="14.2" width="30.4" height="8" fill="#fff" stroke="#111" stroke-width=".7"/><text x="160.6" y="20.4" font-size="5.4" text-anchor="middle" font-family="'Liberation Sans',sans-serif" fill="#111" font-weight="bold">Hybrid</text><rect x="176.4" y="14.2" width="30.4" height="8" fill="#fff" stroke="#111" stroke-width=".7"/><text x="191.6" y="20.4" font-size="5.4" text-anchor="middle" font-family="'Liberation Sans',sans-serif" fill="#111">Terrain</text><path d="M132 220L110 252.5L154.5 220z" fill="#fff"/><rect x="51" y="27.3" width="156.600" height="194.200" rx="9" fill="#fff"/><rect x="57.600" y="36" width="143.200" height="171.400" rx="1.500" fill="#fff" stroke="#cfcfcf" stroke-width=".9"/><rect x="56.800" y="35.400" width="144.800" height="172.600" rx="2" fill="none" stroke="#ececec" stroke-width="1"/><rect x="59.500" y="38" width="139.800" height="35.400" fill="url(#tgb)"/><rect x="62" y="40" width="99.7" height="16.2" fill="url(#t1b)"/><rect x="62" y="56.4" width="49.6" height="17" fill="#fff" stroke="#777" stroke-width=".6" stroke-dasharray="1 .8"/><text x="71" y="49.5" font-size="6.3" font-weight="bold" font-family="'DejaVu Sans','Liberation Sans',sans-serif" fill="#555" textLength="83" lengthAdjust="spacingAndGlyphs">IU HPSS Archival Service</text><text x="71" y="67" font-size="6.3" font-weight="bold" font-family="'DejaVu Sans','Liberation Sans',sans-serif" fill="#222" textLength="32.5" lengthAdjust="spacingAndGlyphs">IU BigRed</text><circle cx="198.6" cy="35.2" r="3" fill="#eef" stroke="#6a5fd0" stroke-width=".7"/><path d="M196.9 33.5l3.4 3.4M200.3 33.5l-3.4 3.4" stroke="#5a4fc8" stroke-width=".8"/><text x="71" y="87.6" font-size="6" font-family="'DejaVu Sans','Liberation Sans',sans-serif" fill="#555" xml:space="preserve"><tspan font-weight="bold" fill="#1a1a1a">SiteID :</tspan> iu.teragrid.org</text><text x="71" y="102.7" font-size="6" font-family="'DejaVu Sans','Liberation Sans',sans-serif" fill="#555" xml:space="preserve"><tspan font-weight="bold" fill="#1a1a1a">ResourceID :</tspan> bigred.iu.teragrid.org</text><text x="71" y="118.6" font-size="6" font-family="'DejaVu Sans','Liberation Sans',sans-serif" fill="#555" xml:space="preserve"><tspan font-weight="bold" fill="#1a1a1a">TgcdbResourceName :</tspan></text><text x="71" y="126.2" font-size="6" font-family="'DejaVu Sans','Liberation Sans',sans-serif" fill="#555" xml:space="preserve"><tspan font-weight="bold" fill="#1a1a1a"></tspan>bigred.iu.teragrid</text><text x="71" y="141.2" font-size="6" font-family="'DejaVu Sans','Liberation Sans',sans-serif" fill="#555" xml:space="preserve"><tspan font-weight="bold" fill="#1a1a1a">ResourceName :</tspan> IU BigRed</text><text x="71" y="157" font-size="6" font-family="'DejaVu Sans','Liberation Sans',sans-serif" fill="#555" xml:space="preserve"><tspan font-weight="bold" fill="#1a1a1a">OrganizationName :</tspan> Indiana</text><text x="71" y="164.4" font-size="6" font-family="'DejaVu Sans','Liberation Sans',sans-serif" fill="#555" xml:space="preserve"><tspan font-weight="bold" fill="#1a1a1a"></tspan>University</text><text x="71" y="180.2" font-size="6" font-family="'DejaVu Sans','Liberation Sans',sans-serif" fill="#555" xml:space="preserve"><tspan font-weight="bold" fill="#1a1a1a">PopsName :</tspan> Indiana University IBM</text><text x="71" y="187.6" font-size="6" font-family="'DejaVu Sans','Liberation Sans',sans-serif" fill="#555" xml:space="preserve"><tspan font-weight="bold" fill="#1a1a1a"></tspan>e1350 (Big Red)</text></g></svg></div>
      <div class="cap" style="top:481px">Thumbnail</div>
    </div>
  </div>
</div></div>
</body>
</html>
